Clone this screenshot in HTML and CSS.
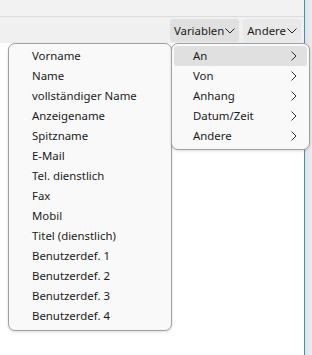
FILE: index.html
```html
<!DOCTYPE html>
<html lang="de">
<head>
<meta charset="UTF-8">
<meta name="viewport" content="width=device-width, initial-scale=1.0">
<title>Variablen</title>
<link rel="stylesheet" href="styles.css">
</head>
<body>
  <div class="window">
    <div class="main">
      <div class="topbar"></div>
      <div class="toolbar">
        <button class="tool-btn active">Variablen<svg class="caret" viewBox="0 0 10 6" width="10" height="6"><path d="M0.5 0.5 L5 5 L9.5 0.5" fill="none" stroke="#222" stroke-width="1"/></svg></button>
        <button class="tool-btn">Andere<svg class="caret" viewBox="0 0 10 6" width="10" height="6"><path d="M0.5 0.5 L5 5 L9.5 0.5" fill="none" stroke="#222" stroke-width="1"/></svg></button>
      </div>
      <div class="content"></div>
    </div>
    <div class="edge"></div>
  </div>

  <!-- Untermenü "An" -->
  <ul class="menu fields">
    <li>Vorname</li>
    <li>Name</li>
    <li>vollständiger Name</li>
    <li>Anzeigename</li>
    <li>Spitzname</li>
    <li>E-Mail</li>
    <li>Tel. dienstlich</li>
    <li>Fax</li>
    <li>Mobil</li>
    <li>Titel (dienstlich)</li>
    <li>Benutzerdef. 1</li>
    <li>Benutzerdef. 2</li>
    <li>Benutzerdef. 3</li>
    <li>Benutzerdef. 4</li>
  </ul>

  <!-- Menü "Variablen" -->
  <ul class="menu groups">
    <li class="hover">An<svg class="arrow" viewBox="0 0 6 10" width="6" height="10"><path d="M0.5 0.5 L5 5 L0.5 9.5" fill="none" stroke="#333" stroke-width="1"/></svg></li>
    <li>Von<svg class="arrow" viewBox="0 0 6 10" width="6" height="10"><path d="M0.5 0.5 L5 5 L0.5 9.5" fill="none" stroke="#333" stroke-width="1"/></svg></li>
    <li>Anhang<svg class="arrow" viewBox="0 0 6 10" width="6" height="10"><path d="M0.5 0.5 L5 5 L0.5 9.5" fill="none" stroke="#333" stroke-width="1"/></svg></li>
    <li>Datum/Zeit<svg class="arrow" viewBox="0 0 6 10" width="6" height="10"><path d="M0.5 0.5 L5 5 L0.5 9.5" fill="none" stroke="#333" stroke-width="1"/></svg></li>
    <li>Andere<svg class="arrow" viewBox="0 0 6 10" width="6" height="10"><path d="M0.5 0.5 L5 5 L0.5 9.5" fill="none" stroke="#333" stroke-width="1"/></svg></li>
  </ul>
</body>
</html>
```

FILE: styles.css
```css
body {
  margin: 0;
  font-family: "Noto Sans", "Open Sans", sans-serif;
  font-size: 11.4px;
  color: #1a1a1a;
  background: #fff;
  overflow: hidden;
}

.window {
  display: flex;
  height: 355px;
}
.main {
  flex: 1;
  display: flex;
  flex-direction: column;
  border-right: 1px solid #3d8ec4; /* blauer Rand */
}
.edge {
  width: 7px;
  background: linear-gradient(to right, #e2e2e2, #ececec);
}

.topbar {
  height: 16px;
  background: #f2f2f2;
  border-bottom: 1px solid #dcdcdc;
}
.toolbar {
  height: 26px;
  background: #f0f0f0;
  display: flex;
  justify-content: flex-end;
  align-items: flex-start;
  gap: 4px;
  padding: 2px 3px 0 0;
  box-sizing: border-box;
}
.content {
  flex: 1;
  background: #fff;
}

.tool-btn {
  font: inherit;
  color: #1a1a1a;
  height: 23px;
  padding: 0 4px;
  border: none;
  border-radius: 3px;
  background: #e9e9e9;
  display: flex;
  align-items: center;
  gap: 1px;
}
.tool-btn.active {
  background: #e0e0e0;
}

.menu {
  position: absolute;
  list-style: none;
  margin: 0;
  background: #f9f9f9;
  border: 1px solid #a0a0a0;
  border-radius: 7px;
  box-shadow: 0 1px 3px rgba(0, 0, 0, 0.15);
  box-sizing: border-box;
}
.menu li {
  height: 20px;
  line-height: 20px;
  display: flex;
  align-items: center;
}

.fields {
  top: 43px;
  left: 8px;
  width: 164px;
  height: 288px;
  padding: 2px 0 0 23px;
}

.groups {
  top: 43px;
  left: 171px;
  width: 139px;
  height: 107px;
  padding: 2px 2px;
}
.groups li {
  padding: 0 10px 0 19px;
  justify-content: space-between;
  border-radius: 3px;
}
.groups li.hover {
  background: #e0e0e0;
}
```
